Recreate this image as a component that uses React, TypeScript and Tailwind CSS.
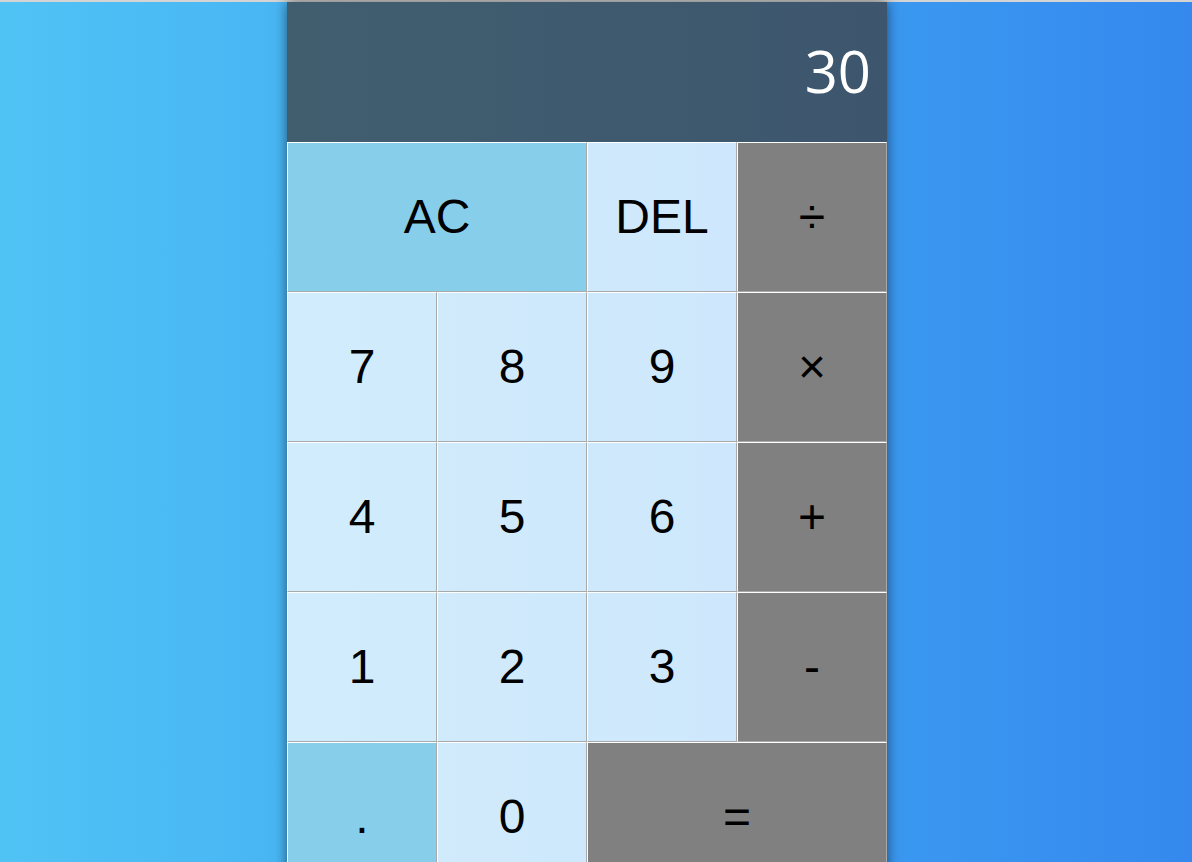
import React, { useState } from "react";

type Key = {
  label: string;
  kind: "digit" | "op" | "accent";
  span?: boolean;
};

const keys: Key[] = [
  { label: "AC", kind: "accent", span: true },
  { label: "DEL", kind: "digit" },
  { label: "÷", kind: "op" },
  { label: "7", kind: "digit" },
  { label: "8", kind: "digit" },
  { label: "9", kind: "digit" },
  { label: "×", kind: "op" },
  { label: "4", kind: "digit" },
  { label: "5", kind: "digit" },
  { label: "6", kind: "digit" },
  { label: "+", kind: "op" },
  { label: "1", kind: "digit" },
  { label: "2", kind: "digit" },
  { label: "3", kind: "digit" },
  { label: "-", kind: "op" },
  { label: ".", kind: "accent" },
  { label: "0", kind: "digit" },
  { label: "=", kind: "op", span: true },
];

const kindClass = {
  digit: "bg-white/75",
  op: "bg-[#808080]",
  accent: "bg-[#87ceeb]",
};

const App = () => {
  const [display] = useState("30");

  return (
    <div className="min-h-screen bg-gradient-to-r from-[#50c3f5] to-[#3589ee] font-['Liberation_Sans',Arial,sans-serif]">
      <div className="h-[2px] bg-[#d4d4d4]" />
      <div className="flex justify-center pr-[18px]">
        <div className="w-[600px] shadow-[0_0_12px_rgba(0,0,0,0.55)]">
          <div className="flex h-[140px] items-center justify-end bg-gradient-to-r from-[#415e6f] to-[#3d566e] pr-[16px] pb-[2px]">
            <span className="font-['Open_Sans',sans-serif] text-[58px] leading-none text-white">
              {display}
            </span>
          </div>
          <div className="grid grid-cols-[repeat(4,150px)] auto-rows-[150px]">
            {keys.map((k) => (
              <button
                key={k.label}
                className={
                  "flex items-center justify-center border border-t-white border-l-white border-r-[#a9a9a9] border-b-[#a9a9a9] text-[48px] leading-none text-black " +
                  kindClass[k.kind] +
                  (k.span ? " col-span-2" : "")
                }
              >
                {k.label}
              </button>
            ))}
          </div>
        </div>
      </div>
    </div>
  );
};

export default App;
